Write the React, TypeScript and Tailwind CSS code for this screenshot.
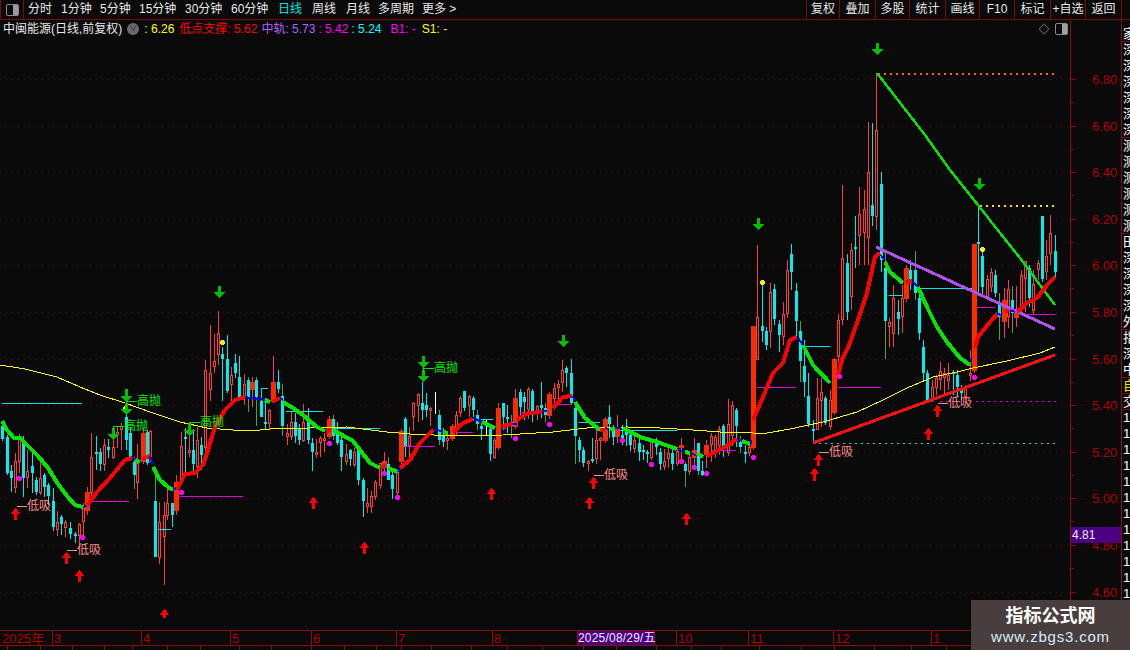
import React from "react";

type C = [number, number, number, number, number, string];
const candles: C[] = [
[2,424,426,439,441,"c"],[7,435,437,473,475,"c"],[11,465,471,478,492,"c"],[15,453,461,488,493,"r"],[19,434,436,462,473,"r"],[23,436,440,478,497,"c"],[27,450,471,478,488,"r"],[32,452,466,473,493,"c"],[36,477,480,492,495,"c"],[40,462,478,493,495,"r"],[44,473,475,487,497,"c"],[48,483,485,496,505,"c"],[53,488,501,527,531,"c"],[57,511,522,530,536,"r"],[61,515,517,524,535,"c"],[65,520,522,528,537,"r"],[70,522,528,534,539,"c"],[75,532,534,536,543,"c"],[79,523,524,536,545,"r"],[83,503,508,522,535,"r"],
[87,487,492,511,515,"s"],[91,433,457,493,503,"r"],[96,436,452,454,470,"c"],[100,448,452,464,471,"c"],[104,439,445,465,471,"r"],[108,439,447,450,458,"c"],[113,432,447,458,459,"r"],[117,426,432,435,448,"r"],[121,423,426,430,450,"r"],[126,407,417,440,450,"c"],[130,427,433,457,460,"c"],[134,457,462,475,489,"g"],[137,444,463,483,499,"r"],[143,428,433,462,464,"s"],[147,430,432,463,465,"c"],[150,430,431,457,462,"r"],[155,473,501,557,557,"g"],[159,502,522,558,564,"r"],[164,502,515,537,585,"r"],[167,488,503,516,520,"r"],[172,503,503,515,527,"c"],[176,475,482,511,515,"s"],[181,432,446,482,485,"r"],[185,428,437,439,472,"c"],[189,435,450,453,457,"r"],[193,429,450,464,472,"c"],[197,427,440,467,478,"r"],[201,437,445,455,470,"c"],[205,360,370,448,460,"r"],[210,325,373,390,401,"r"],[214,334,361,367,373,"r"],[218,311,333,355,365,"r"],[222,347,354,359,401,"c"],[227,335,359,391,393,"c"],[231,367,375,385,403,"r"],[235,354,363,373,378,"c"],[239,356,377,397,400,"c"],[244,374,384,398,405,"r"],[248,377,380,397,412,"g"],[252,377,382,390,407,"p"],[256,377,380,397,426,"g"],[261,398,401,417,417,"c"],[265,398,422,424,430,"c"],[269,409,410,424,429,"r"],[273,356,382,402,403,"p"],[278,370,382,389,393,"c"],[282,384,396,426,436,"g"],[287,424,433,437,445,"r"],[291,411,422,437,440,"r"],[295,413,422,436,443,"c"],[299,424,429,440,445,"c"],[303,404,422,441,442,"r"],[308,408,418,440,444,"c"],
[312,438,443,452,471,"c"],[316,439,452,455,458,"r"],[320,436,438,443,457,"r"],[324,433,438,441,452,"r"],[329,416,419,437,439,"s"],[333,415,419,436,440,"g"],[337,422,432,443,445,"c"],[341,437,440,457,471,"c"],[346,444,454,462,465,"r"],[350,449,450,459,466,"c"],[354,448,452,465,467,"r"],[358,447,450,480,485,"c"],[363,478,480,501,517,"c"],[367,488,503,507,513,"r"],[371,491,496,507,513,"r"],[375,480,482,497,500,"r"],[380,463,463,486,489,"r"],[384,452,461,468,473,"p"],[388,457,464,480,480,"g"],[392,470,475,489,499,"c"],[397,470,472,493,495,"r"],[401,429,431,462,464,"s"],[405,417,419,447,457,"c"],[409,427,436,446,457,"r"],[413,402,403,417,431,"r"],[418,393,394,406,422,"r"],[422,382,403,410,420,"c"],[426,393,405,410,417,"c"],[430,407,408,411,426,"r"],[439,410,415,440,445,"g"],[443,428,435,442,447,"c"],[447,432,438,441,450,"r"],[452,424,426,439,441,"s"],[456,411,415,427,435,"r"],[460,396,398,413,417,"r"],[464,391,391,408,411,"c"],[469,395,396,406,417,"r"],[473,396,398,410,420,"c"],[477,410,415,424,430,"g"],[481,422,426,429,440,"c"],[490,428,429,454,461,"c"],[494,438,440,458,459,"r"],[498,403,408,448,450,"s"],[503,403,403,417,430,"c"],[507,405,417,419,433,"c"],[511,415,422,426,438,"g"],[515,389,398,427,429,"p"],[520,389,392,407,417,"c"],[524,392,397,402,420,"c"],[528,387,389,410,419,"r"],[532,389,391,412,422,"c"],[537,405,406,412,420,"r"],[541,382,405,408,418,"c"],[545,403,408,415,422,"g"],[549,392,394,416,419,"s"],[554,383,388,399,410,"r"],[558,380,384,388,400,"r"],[562,360,370,383,392,"r"],[566,366,368,373,387,"c"],[571,359,373,403,405,"c"],[575,403,408,436,464,"g"],[579,437,440,450,462,"c"],[583,447,450,463,467,"c"],[588,460,461,464,471,"r"],[592,438,459,461,463,"c"],[596,430,440,459,464,"r"],[600,437,438,441,460,"r"],[605,417,419,441,443,"s"],[609,405,417,424,438,"c"],[613,425,427,437,445,"c"],[617,415,428,437,443,"p"],[622,425,435,438,445,"c"],[626,419,430,435,446,"c"],[630,433,435,445,451,"c"],[634,432,440,449,453,"r"],[639,438,443,452,461,"c"],[643,445,450,452,460,"c"],[647,450,452,454,463,"c"],[651,440,442,458,460,"r"],[656,438,443,447,455,"c"],[660,448,452,464,470,"c"],[664,449,461,467,470,"r"],[668,448,453,459,468,"r"],[672,448,453,464,470,"c"],[677,449,451,464,466,"r"],[681,438,445,448,463,"p"],[685,462,464,471,487,"g"],[689,455,457,472,475,"r"],[694,438,450,458,470,"p"],[698,443,443,471,475,"g"],[702,461,471,475,476,"c"],[706,440,445,455,468,"p"],[711,433,436,445,462,"r"],[715,435,437,453,458,"r"],[719,426,429,446,455,"r"],[723,424,426,448,457,"c"],[728,399,424,453,456,"r"],[732,401,405,436,446,"r"],[736,408,410,426,447,"c"],[740,436,442,447,453,"g"],[745,445,452,454,463,"c"],[749,444,447,453,456,"r"],[753,326,326,448,450,"s"],
[757,245,317,360,360,"r"],[762,285,326,331,342,"c"],[766,327,331,345,350,"c"],[770,283,292,332,348,"r"],[774,284,289,319,325,"c"],[779,320,324,335,352,"c"],[783,302,314,337,345,"r"],[787,260,270,314,318,"r"],[791,244,254,272,290,"c"],[796,283,291,321,338,"c"],[800,321,331,361,382,"g"],[804,340,366,382,397,"c"],[808,373,396,424,427,"c"],[813,420,429,431,443,"c"],[817,378,398,430,430,"r"],[821,378,392,401,427,"r"],[825,396,398,423,425,"c"],[830,390,400,427,430,"r"],[834,358,359,413,415,"s"],[838,314,320,357,363,"r"],[842,185,258,320,325,"r"],[847,254,263,312,320,"c"],[851,243,250,297,310,"r"],[855,216,247,249,268,"c"],[859,187,214,236,265,"r"],[864,190,209,233,265,"r"],[868,122,172,238,265,"r"],[872,123,205,216,226,"c"],[876,73,130,217,230,"r"],[881,172,184,260,272,"c"],[885,251,268,321,359,"g"],[889,318,322,327,347,"r"],[893,285,298,334,347,"r"],[898,300,312,319,335,"c"],[902,285,298,317,333,"r"],[906,265,268,299,302,"s"],[910,260,270,279,290,"c"],[915,251,270,293,300,"g"],[919,288,298,333,340,"c"],[923,340,347,373,380,"c"],[927,370,373,400,402,"c"],[932,380,387,399,402,"r"],[936,375,378,388,395,"r"],[940,362,371,380,390,"r"],[944,368,373,378,395,"r"],[948,363,375,381,390,"r"],[953,370,372,374,395,"c"],[957,370,375,387,397,"c"],[961,385,390,393,400,"c"],[965,385,388,397,400,"r"],[970,350,373,376,381,"r"],[974,244,244,371,373,"s"],[978,205,242,244,293,"c"],[982,250,256,287,295,"c"],[987,275,279,297,300,"r"],[991,268,272,287,292,"r"],[995,270,275,293,297,"c"],[999,293,303,317,340,"g"],[1004,288,300,322,338,"p"],[1008,280,289,317,328,"r"],[1012,286,300,313,333,"g"],[1016,286,312,318,327,"p"],[1021,270,275,307,312,"r"],[1025,261,261,279,312,"r"],[1029,265,268,298,307,"c"],[1033,270,284,311,315,"r"],[1038,260,263,270,280,"r"],[1042,216,216,279,282,"c"],[1046,240,256,272,280,"r"],[1050,215,233,254,265,"r"],[1055,235,251,272,277,"c"],
];

const R = "#ff0000", G = "#00e600", B = "#0000ff";
const bands: [string, string][] = [
[G,"2,421 7,430 14,438 20,438 28,446 38,456 48,468 58,484 67,496 75,505 83,507"],[B,"83,507 87,506"],
[R,"87,505 90,502 97,492 110,478 125,460 132,458"],[B,"132,458 135,459"],[G,"135,460 140,462"],[R,"142,459 150,456"],[B,"150,456 153,464"],
[G,"153,467 160,480 168,487 173,490"],[B,"173,490 176,488"],[R,"177,490 185,474 195,473 203,465 208,450 215,427 225,410 235,400 245,397"],[B,"245,397 265,400"],[G,"265,400 270,402"],[R,"272,402 280,398"],[B,"280,398 283,400"],
[G,"283,402 293,408 303,415 317,427 325,431"],[R,"326,431 331,430"],[G,"333,430 353,441 360,450 370,463 380,468"],[R,"381,467 386,466"],[G,"388,468 398,472"],[B,"398,472 400,469"],
[R,"400,468 410,460 420,443 433,430"],[B,"435,429 445,433"],[G,"443,432 448,433"],[R,"453,432 463,423 473,419"],[B,"473,418 482,422"],[G,"482,422 495,428"],[R,"502,426 512,424"],[B,"512,424 517,424"],
[R,"517,420 528,413 542,412"],[B,"542,411 547,411"],[R,"553,408 563,397 572,396"],[B,"572,396 575,400"],[G,"575,402 585,418 600,430"],[R,"600,430 605,430"],[B,"605,428 609,429"],[G,"610,429 615,429"],[B,"615,428 621,428"],[G,"623,428 640,437 657,442 677,449"],[B,"678,449 684,452"],[G,"685,452 690,453"],[B,"691,453 697,456"],[G,"697,453 703,457"],[R,"707,456 723,448 737,439"],[B,"737,439 742,441"],[G,"742,441 750,444"],[B,"751,444 751,440"],
[R,"753,420 763,397 773,373 783,363 790,340 797,337"],[B,"798,338 803,345"],[G,"803,345 813,365 830,383"],[R,"838,375 843,357 848,348 857,323 867,293 875,257 880,253"],[B,"881,255 884,260"],[G,"885,262 890,272 903,283"],[R,"905,282 912,282"],[B,"913,282 918,287"],[G,"918,287 927,307 937,327 947,342 960,358 970,365"],[B,"971,362 971,358"],
[R,"975,348 978,337 990,322 998,313"],[B,"997,314 1002,315"],[R,"1005,312 1009,310"],[B,"1010,310 1015,312"],[R,"1017,312 1027,303 1037,298 1047,285 1055,277"],
];

const yellowMa = "0,365 25,369 57,377 80,387 100,395 125,403 150,412 180,422 207,428 233,430 260,430 270,429 310,428 347,427 387,432 410,434 457,436 503,435 520,434 553,432 587,428 627,427 660,428 693,430 720,432 753,433 767,433 790,429 823,422 857,412 883,400 907,388 933,377 957,372 973,368 1007,361 1040,353 1055,347";

const hLines: [number, number, number, string][] = [
[2,82,403,"#00e6e6"],[90,129,501,"#e000e0"],[180,243,496,"#e000e0"],[159,171,529,"#00e6e6"],[286,323,411,"#00e6e6"],[333,380,428,"#00e6e6"],[405,435,446,"#e000e0"],[457,473,432,"#e000e0"],[481,493,419,"#00e6e6"],[503,507,428,"#e000e0"],[520,527,412,"#e000e0"],[553,572,404,"#e000e0"],[579,600,422,"#00e6e6"],[620,677,430,"#00e6e6"],[712,736,450,"#e000e0"],[757,796,387,"#e000e0"],[803,830,346,"#00e6e6"],[838,881,387,"#e000e0"],[889,903,295,"#00e6e6"],[920,972,288,"#00e6e6"],[977,995,307,"#e000e0"],[1023,1055,314,"#e000e0"],
];

const dotted: [number, number, number, string, number][] = [
[878,1056,73,"#ff6600",2],[980,1056,205,"#ffe000",2],[940,1056,401,"#e000e0",1],[813,1056,443,"#00e6e6",1],
];

const magentaStars = [[19,478],[82,537],[181,492],[329,443],[384,473],[397,497],[515,438],[549,424],[622,440],[651,464],[681,461],[694,467],[706,473],[753,457],[839,376],[974,377]];
const yellowStars = [[125,408],[222,342],[762,282],[982,249]];
const downs = [[126,389,402],[126,403,415],[113,428,440],[189,423,436],[219,286,298],[423,356,368],[423,370,382],[563,335,347],[758,218,230],[877,43,55],[979,178,190]];
const ups = [[15,508,520],[66,552,564],[79,570,582],[164,609,618],[313,497,509],[364,542,554],[491,488,500],[593,477,489],[589,497,509],[686,513,525],[818,454,466],[814,468,481],[937,405,417],[928,428,440]];
const lowLabels = [[16,506],[66,550],[593,475],[818,452],[937,403]];
const highLabels = [[126,401],[113,426],[189,422],[423,368]];
const gridPrices = [79,126,172,219,265,312,359,405,452,498,545,592];

function Candle({ c }: { c: C }) {
  const [x, hi, top, bot, lo, t] = c;
  if (t === "s" || t === "p") {
    const wick = t === "p" ? "#ff3090" : "#ff3030";
    return (
      <g>
        <rect x={x} y={hi} width={1} height={lo - hi} fill={wick} />
        <rect x={x - 2} y={top} width={5} height={bot - top} fill="#ff2a00" />
      </g>
    );
  }
  if (t === "r") {
    return (
      <g>
        <rect x={x} y={hi} width={1} height={Math.max(top - hi, 0)} fill="#ff3c3c" />
        <rect x={x} y={bot} width={1} height={Math.max(lo - bot, 0)} fill="#ff3c3c" />
        <rect x={x - 0.5} y={top + 0.5} width={2} height={Math.max(bot - top - 1, 1)} fill="none" stroke="#ff3c3c" strokeWidth={1} />
      </g>
    );
  }
  return (
    <g>
      <rect x={x} y={hi} width={1} height={lo - hi} fill={t === "g" ? "#3fa35a" : "#00e8e8"} />
      <rect x={x - 1} y={top} width={3} height={Math.max(bot - top, 1)} fill="#00eeee" />
    </g>
  );
}

function Chart() {
  return (
    <svg width={1070} height={592} viewBox="0 38 1070 592" shapeRendering="crispEdges" className="block">
      {gridPrices.map((y) => (
        <line key={y} x1={0} x2={1070} y1={y + 0.5} y2={y + 0.5} stroke="#5c1010" strokeWidth={1} strokeDasharray="1 5" />
      ))}
      {candles.map((c, i) => (
        <Candle key={i} c={c} />
      ))}
      <rect x={435} y={392} width={1} height={22} fill="#ffffff" />
      <rect x={486} y={420} width={1} height={15} fill="#ffffff" />
      <path d="M261 401V388.5H268" fill="none" stroke="#00e6e6" />
      {hLines.map(([a, b, y, col], i) => (
        <rect key={i} x={a} y={y} width={b - a} height={1} fill={col} />
      ))}
      {dotted.map(([a, b, y, col, w], i) => (
        <line key={i} x1={a} x2={b} y1={y + 0.5} y2={y + 0.5} stroke={col} strokeWidth={w} strokeDasharray="2 4" />
      ))}
      <polyline points={yellowMa} fill="none" stroke="#ffff00" strokeWidth={1} />
      <line x1={813} y1={443} x2={1055} y2={355} stroke="#ff1010" strokeWidth={3} />
      <line x1={876} y1={247} x2={1055} y2={329} stroke="#b050f0" strokeWidth={3} />
      <polyline points="877,73 925,135 950,170 978,205 1000,233 1020,258 1055,305" fill="none" stroke="#00e600" strokeWidth={2.4} />
      {bands.map(([col, pts], i) => (
        <polyline key={i} points={pts} fill="none" stroke={col} strokeWidth={col === B ? 2 : 4} strokeLinejoin="round" />
      ))}
      {magentaStars.map(([x, y], i) => (
        <path key={i} d={`M${x - 1} ${y - 2}h3v1h1v3h-1v1h-3v-1h-1v-3h1z`} fill="#ff00ff" />
      ))}
      {yellowStars.map(([x, y], i) => (
        <path key={i} d={`M${x - 1} ${y - 2}h3v1h1v3h-1v1h-3v-1h-1v-3h1z`} fill="#ffee00" />
      ))}
      {downs.map(([x, a, b], i) => (
        <path key={i} d={`M${x - 1} ${a}h3v${b - a - 6}h4l-5.5 6l-5.5 -6h4z`} fill="#00c000" />
      ))}
      {ups.map(([x, a, b], i) => (
        <path key={i} d={`M${x + 0.5} ${a}l5 6h-3.5v${b - a - 6}h-3v${-(b - a - 6)}h-3.5z`} fill="#ff0000" />
      ))}
      {lowLabels.map(([x, y], i) => (
        <g key={i}>
          <path d={`M${x + 1} ${y + 0.5}h10`} stroke="#ff8a8a" fill="none" />
          <text x={x + 11} y={y + 4} fontSize={12} fill="#ff8a8a">低吸</text>
        </g>
      ))}
      {highLabels.map(([x, y], i) => (
        <g key={i}>
          <path d={`M${x} ${y + 4}V${y + 0.5}H${x + 11}`} stroke="#00e000" fill="none" />
          <text x={x + 11} y={y + 4} fontSize={12} fill="#00ee00">高抛</text>
        </g>
      ))}
    </svg>
  );
}

const prices = ["6.80","6.60","6.40","6.20","6.00","5.80","5.60","5.40","5.20","5.00","4.80","4.60"];

function PriceAxis() {
  return (
    <div className="relative w-[50px] h-[610px]">
      <svg width={50} height={610} viewBox="1071 20 50 610" shapeRendering="crispEdges" className="block">
        {gridPrices.map((y, i) => (
          <g key={y}>
            <rect x={1071} y={y} width={5} height={1} fill="#a00000" />
            <rect x={1071} y={y + 23} width={3} height={1} fill="#a00000" />
            <text x={1092} y={y + 5} fontSize={13} fill="#b00000">{prices[i]}</text>
          </g>
        ))}
      </svg>
      <div className="absolute left-0 top-[507px] w-[50px] h-[16px] bg-[#4b0082] text-[#f0e8ff] text-[12px] leading-[16px] pl-[1px]">4.81</div>
    </div>
  );
}

function PanelIcon({ light }: { light?: boolean }) {
  return (
    <div className="w-[13px] h-[12px] rounded-[2px] border border-[#8a8a8a] flex justify-end">
      <div className={light ? "w-[5px] h-full bg-[#a0a0a0]" : "w-[5px] h-full bg-[#9a9a9a]"} />
    </div>
  );
}

const leftTabs: [string, string, string][] = [
["分时","w-[33px]","text-[#e8e8e8]"],["1分钟","w-[39px]","text-[#e8e8e8]"],["5分钟","w-[39px]","text-[#e8e8e8]"],["15分钟","w-[46px]","text-[#e8e8e8]"],["30分钟","w-[46px]","text-[#e8e8e8]"],["60分钟","w-[47px]","text-[#e8e8e8]"],["日线","w-[34px]","text-[#00e6e6]"],["周线","w-[34px]","text-[#e8e8e8]"],["月线","w-[32px]","text-[#e8e8e8]"],["多周期","w-[44px]","text-[#e8e8e8]"],["更多 >","w-[38px]","text-[#e8e8e8]"],
];
const rightTabs: [string, string][] = [
["复权","w-[33px]"],["叠加","w-[36px]"],["多股","w-[34px]"],["统计","w-[36px]"],["画线","w-[34px]"],["F10","w-[35px]"],["标记","w-[36px]"],["+自选","w-[35px]"],["返回","w-[36px]"],
];

const W = "text-white";
const rightRows: [string, boolean, string][] = [
["家",true,W],["深",false,W],["深",false,W],["深",false,W],["深",false,W],["深",false,W],["深",true,W],
["测",false,W],["测",false,W],["测",false,W],["测",false,W],["测",false,W],["测",true,W],
["田",false,W],["深",false,W],["深",false,W],["深",false,W],["深",false,W],["外",true,W],
["指",false,W],["深",false,W],["中",true,W],["自",true,"text-[#e6e600]"],["交",true,W],
["1",false,W],["1",false,W],["1",false,W],["1",false,W],["1",false,W],["1",false,W],["1",false,W],["1",false,W],["1",false,W],["1",false,W],["1",false,W],["1",false,W],
];

const axisCells: [string, string][] = [
["2025年","w-[52px]"],["3","w-[89px]"],["4","w-[89px]"],["5","w-[81px]"],["6","w-[85px]"],["7","w-[96px]"],["8","w-[85px]"],
];
const axisCells2: [string, string][] = [["","w-[21px]"],["10","w-[72px]"],["11","w-[85px]"],["12","w-[98px]"],["1","w-[60px]"]];

export default function App() {
  return (
    <div className="relative w-[1130px] h-[650px] overflow-hidden bg-[#0a0a0a] font-['Liberation_Sans','Noto_Sans_CJK_SC',sans-serif] flex flex-col">
      <div className="h-[20px] border-b border-[#7a0c0c] flex items-center text-[12px] leading-[19px] shrink-0">
        <div className="w-[24px] h-full border-r border-l border-[#7a0c0c] flex items-center justify-center mr-[4px]">
          <PanelIcon />
        </div>
        {leftTabs.map(([t, w, c]) => (
          <div key={t} className={`${w} ${c} whitespace-nowrap`}>{t}</div>
        ))}
        <div className="flex-1" />
        {rightTabs.map(([t, w]) => (
          <div key={t} className={`${w} h-full border-l border-[#7a0c0c] text-[#e8e8e8] text-center whitespace-nowrap`}>{t}</div>
        ))}
        <div className="w-[9px] h-full border-l border-[#7a0c0c]" />
      </div>

      <div className="flex h-[610px] shrink-0">
        <div className="w-[1071px] border-r border-[#8a0c0c] flex flex-col">
          <div className="h-[18px] flex items-center text-[12px] leading-[18px] pl-[3px] whitespace-nowrap">
            <span className="text-[#e8e8e8]">中闽能源(日线,前复权)</span>
            <span className="ml-[5px] w-[12px] h-[12px] rounded-full bg-[#6a6a6a] text-[#222] text-[8px] leading-[12px] text-center">∨</span>
            <span className="ml-[5px] text-[#ffff00]"> : 6.26</span>
            <span className="ml-[5px] text-[#ff0000]">低点支撑: 5.62</span>
            <span className="ml-[4px] text-[#b060ff]">中轨: 5.73</span>
            <span className="ml-[3px] text-[#ff00ff]">: 5.42</span>
            <span className="ml-[3px] text-[#00ffff]">: 5.24</span>
            <span className="ml-[9px] text-[#ff00ff]">B1: -</span>
            <span className="ml-[6px] text-[#ffff00]">S1: -</span>
            <div className="flex-1" />
            <div className="w-[8px] h-[8px] rotate-45 border border-[#5a5a5a] mr-[7px]" />
            <div className="mr-[2px]"><PanelIcon light /></div>
          </div>
          <Chart />
        </div>
        <div className="w-[51px] border-r border-[#8a0c0c]">
          <PriceAxis />
        </div>
        <div className="w-[8px] overflow-hidden pt-[6px] flex flex-col text-[13px] leading-[15px]">
          {rightRows.map(([t, sep, c], i) => (
            <div key={i} className={`h-[16px] shrink-0 pl-[1px] ${c} ${sep ? "border-b border-[#7a0c0c]" : ""}`}>{t}</div>
          ))}
        </div>
      </div>

      <div className="relative h-[16px] border-t border-b border-[#8a0c0c] flex text-[13px] leading-[15px] text-[#b00000] shrink-0">
        {axisCells.map(([t, w], i) => (
          <div key={t} className={`${w} h-full whitespace-nowrap ${i > 0 ? "border-l border-[#8a0c0c] pl-[1px]" : "pl-[2px]"}`}>{t}</div>
        ))}
        <div className="w-[78px] h-full bg-[#4b0082] border-l border-r border-[#8a0c0c] text-[#f0e8ff] text-[12px] tracking-[0.2px] text-center whitespace-nowrap">2025/08/29/五</div>
        {axisCells2.map(([t, w], i) => (
          <div key={i} className={`${w} h-full whitespace-nowrap pl-[1px] ${i > 0 ? "border-l border-[#8a0c0c]" : ""}`}>{t}</div>
        ))}
      </div>
      <div className="h-[4px] flex shrink-0">
        {[8,33,32,32,28,35,33,39,32,40,33,32,25,30,40,36,35,41,33,40,35,30,38,42,33,40,37,35,30,29,33,34].map((w, i) => (
          <div key={i} className="h-full border-r border-[#8a0c0c]" style={{ width: w }} />
        ))}
      </div>

      <div className="absolute left-[971px] top-[600px] w-[159px] h-[50px] bg-[#483e3e] flex flex-col items-center justify-center">
        <div className="text-white font-bold text-[18px] leading-[24px]">指标公式网</div>
        <div className="text-[#d8ecff] text-[15px] leading-[18px] tracking-[0.8px]">www.zbgs3.com</div>
      </div>
    </div>
  );
}
